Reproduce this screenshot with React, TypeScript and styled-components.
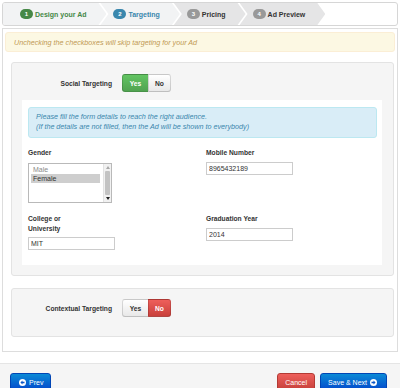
import styled, { createGlobalStyle } from 'styled-components';

type StepState = 'done' | 'active' | 'todo';
type Tone = 'success' | 'danger';

const STEPS: { n: number; label: string; state: StepState }[] = [
  { n: 1, label: 'Design your Ad', state: 'done' },
  { n: 2, label: 'Targeting', state: 'active' },
  { n: 3, label: 'Pricing', state: 'todo' },
  { n: 4, label: 'Ad Preview', state: 'todo' },
];

const STEP_COLORS: Record<StepState, { text: string; badge: string; bg: string }> = {
  done: { text: '#468847', badge: '#468847', bg: '#f2f3f4' },
  active: { text: '#3a87ad', badge: '#3a87ad', bg: '#f2f3f4' },
  todo: { text: '#333', badge: '#999', bg: '#e5e5e6' },
};

const CircleArrow = ({ dir }: { dir: 'left' | 'right' }) => (
  <svg width="7" height="7" viewBox="0 0 14 14">
    <circle cx="7" cy="7" r="7" fill="#fff" />
    <path
      d={
        dir === 'left'
          ? 'M2.8 7 L7 2.9 L7 5.4 L11 5.4 L11 8.6 L7 8.6 L7 11.1 Z'
          : 'M11.2 7 L7 2.9 L7 5.4 L3 5.4 L3 8.6 L7 8.6 L7 11.1 Z'
      }
      fill="#0a56c8"
    />
  </svg>
);

const Toggle = ({ on, tone }: { on: boolean; tone: Tone }) => (
  <ToggleGroup>
    <ToggleBtn $w={27} $active={on} $tone="success">Yes</ToggleBtn>
    <ToggleBtn $w={23} $active={!on} $tone={tone}>No</ToggleBtn>
  </ToggleGroup>
);

const App = () => {
  return (
    <>
      <GlobalStyle />
      <Page>
        <Wizard>
          {STEPS.map((s, i) => (
            <Step key={s.n} $state={s.state} $first={i === 0}>
              <Badge $state={s.state}>{s.n}</Badge>
              {s.label}
            </Step>
          ))}
        </Wizard>

        <Panel>
          <Warning>Unchecking the checkboxes will skip targeting for your Ad</Warning>

          <Well $top={11} $bottom={10} $gap={10}>
            <ToggleRow>
              <RowLabel>Social Targeting</RowLabel>
              <Toggle on tone="success" />
            </ToggleRow>

            <FormBox>
              <Info>
                Please fill the form details to reach the right audience.
                <br />
                (If the details are not filled, then the Ad will be shown to everybody)
              </Info>

              <FormGrid>
                <Field>
                  <Label $gap={5}>Gender</Label>
                  <ListBox role="listbox" aria-multiselectable="true">
                    <Options>
                      <Option>Male</Option>
                      <Option $selected>Female</Option>
                    </Options>
                    <ScrollBar>
                      <ScrollArrow>
                        <ArrowUp />
                      </ScrollArrow>
                      <Thumb />
                      <ScrollArrow>
                        <ArrowDown />
                      </ScrollArrow>
                    </ScrollBar>
                  </ListBox>
                </Field>
                <Field>
                  <Label $gap={4}>Mobile Number</Label>
                  <TextInput value="8965432189" readOnly />
                </Field>
                <Field>
                  <Label $gap={3} $max={48}>College or University</Label>
                  <TextInput value="MIT" readOnly />
                </Field>
                <Field>
                  <Label $gap={4}>Graduation Year</Label>
                  <TextInput value="2014" readOnly />
                </Field>
              </FormGrid>
            </FormBox>
          </Well>

          <Well $top={10} $bottom={19} $gap={12}>
            <ToggleRow>
              <RowLabel>Contextual Targeting</RowLabel>
              <Toggle on={false} tone="danger" />
            </ToggleRow>
          </Well>
        </Panel>

        <Footer>
          <ActionBtn $tone="primary" $pad="0 7px 0 8px">
            <CircleArrow dir="left" />
            Prev
          </ActionBtn>
          <FooterRight>
            <ActionBtn $tone="danger" $pad="0 7px">Cancel</ActionBtn>
            <ActionBtn $tone="primary" $pad="0 9px 0 7px">
              Save &amp; Next
              <CircleArrow dir="right" />
            </ActionBtn>
          </FooterRight>
        </Footer>
      </Page>
    </>
  );
};

const GlobalStyle = createGlobalStyle`
  html, body {
    margin: 0;
    padding: 0;
    background: #fff;
  }
  body {
    font-family: "Liberation Sans", Arial, sans-serif;
    color: #333;
  }
  * {
    box-sizing: border-box;
  }
`;

const Page = styled.div`
  padding-top: 2px;
  min-height: 388px;
  display: flex;
  flex-direction: column;
`;

const Wizard = styled.div`
  display: flex;
  height: 24px;
  margin: 0 2px;
  border: 1px solid #d6d6d6;
  border-radius: 3px;
  background: #fff;
  overflow: hidden;
`;

const Step = styled.div<{ $state: StepState; $first: boolean }>`
  display: flex;
  align-items: center;
  gap: 2px;
  height: 100%;
  padding: 0 20px 0 ${(p) => (p.$first ? 17 : 13)}px;
  margin-left: ${(p) => (p.$first ? 0 : -6)}px;
  background: ${(p) => STEP_COLORS[p.$state].bg};
  color: ${(p) => STEP_COLORS[p.$state].text};
  font-size: 7px;
  font-weight: bold;
  white-space: nowrap;
  clip-path: ${(p) =>
    p.$first
      ? 'polygon(0 0, calc(100% - 8px) 0, 100% 50%, calc(100% - 8px) 100%, 0 100%)'
      : 'polygon(0 0, calc(100% - 8px) 0, 100% 50%, calc(100% - 8px) 100%, 0 100%, 8px 50%)'};
`;

const Badge = styled.span<{ $state: StepState }>`
  display: inline-flex;
  align-items: center;
  justify-content: center;
  width: 13px;
  height: 10px;
  border-radius: 5px;
  background: ${(p) => STEP_COLORS[p.$state].badge};
  color: #fff;
  font-size: 6px;
  font-weight: bold;
`;

const Panel = styled.div`
  margin: 2px 2px 0;
  border: 1px solid #ddd;
  padding: 3px 2px 14px;
`;

const Warning = styled.div`
  height: 20px;
  display: flex;
  align-items: center;
  padding: 0 8px;
  background: #fcf8e3;
  border: 1px solid #fbeed5;
  border-radius: 3px;
  color: #c09853;
  font-size: 7.2px;
  font-style: italic;
`;

const Well = styled.div<{ $top: number; $bottom: number; $gap: number }>`
  margin: ${(p) => p.$gap}px 1px 0 6px;
  padding: ${(p) => p.$top}px 11px ${(p) => p.$bottom}px 10px;
  background: #f5f5f5;
  border: 1px solid #e3e3e3;
  border-radius: 3px;
`;

const ToggleRow = styled.div`
  display: flex;
  align-items: center;
  height: 18px;
`;

const RowLabel = styled.span`
  width: 90px;
  margin-right: 10px;
  text-align: right;
  font-size: 6.7px;
  font-weight: bold;
  color: #333;
`;

const ToggleGroup = styled.div`
  display: inline-flex;
`;

const ToggleBtn = styled.button<{ $w: number; $active: boolean; $tone: Tone }>`
  width: ${(p) => p.$w}px;
  height: 18px;
  padding: 0;
  font-family: "Liberation Sans", Arial, sans-serif;
  font-size: 6.7px;
  font-weight: bold;
  border: 1px solid rgba(0, 0, 0, 0.14);
  border-bottom-color: rgba(0, 0, 0, 0.25);
  color: ${(p) => (p.$active ? '#fff' : '#333')};
  background: ${(p) =>
    !p.$active
      ? 'linear-gradient(#ffffff, #e8e8e8)'
      : p.$tone === 'success'
        ? 'linear-gradient(#62c462, #51a351)'
        : 'linear-gradient(#ee5f5b, #c9403b)'};
  &:first-child {
    border-radius: 3px 0 0 3px;
  }
  &:last-child {
    border-radius: 0 3px 3px 0;
    margin-left: -1px;
  }
`;

const FormBox = styled.div`
  margin-top: 8px;
  padding: 7px 5px 15px 6px;
  background: #fff;
`;

const Info = styled.div`
  padding: 4px 7px 5px;
  background: #d9edf7;
  border: 1px solid #bce8f1;
  border-radius: 3px;
  color: #3a87ad;
  font-size: 7.2px;
  font-style: italic;
  line-height: 10px;
`;

const FormGrid = styled.div`
  display: grid;
  grid-template-columns: 178px 1fr;
  row-gap: 11px;
  margin-top: 10px;
`;

const Field = styled.div`
  display: flex;
  flex-direction: column;
  align-items: flex-start;
`;

const Label = styled.label<{ $gap: number; $max?: number }>`
  font-size: 6.7px;
  font-weight: bold;
  line-height: 10px;
  margin-bottom: ${(p) => p.$gap}px;
  max-width: ${(p) => (p.$max ? `${p.$max}px` : 'none')};
  color: #333;
`;

const TextInput = styled.input`
  width: 87px;
  height: 13px;
  padding: 0 2px;
  border: 1px solid #ccc;
  border-radius: 0;
  font-family: "Liberation Sans", Arial, sans-serif;
  font-size: 7px;
  color: #333;
  outline: none;
`;

const ListBox = styled.div`
  display: flex;
  width: 84px;
  height: 40px;
  border: 1px solid #b9b9b9;
  background: #fff;
`;

const Options = styled.div`
  flex: 1;
  padding: 1px 3px 0 2px;
`;

const Option = styled.div<{ $selected?: boolean }>`
  height: 9px;
  line-height: 9px;
  padding-left: 2px;
  font-size: 7px;
  color: ${(p) => (p.$selected ? '#333' : '#8a8a8a')};
  background: ${(p) => (p.$selected ? '#cecece' : 'transparent')};
`;

const ScrollBar = styled.div`
  width: 8px;
  display: flex;
  flex-direction: column;
  background: #f1f1f1;
  border-left: 1px solid #e2e2e2;
`;

const ScrollArrow = styled.div`
  height: 7px;
  display: flex;
  align-items: center;
  justify-content: center;
`;

const ArrowUp = styled.span`
  width: 0;
  height: 0;
  border-left: 2px solid transparent;
  border-right: 2px solid transparent;
  border-bottom: 3px solid #a8a8a8;
`;

const ArrowDown = styled.span`
  width: 0;
  height: 0;
  border-left: 2px solid transparent;
  border-right: 2px solid transparent;
  border-top: 3px solid #222;
`;

const Thumb = styled.div`
  flex: 1;
  margin: 0 1px;
  background: #c3c3c3;
  border-radius: 1px;
`;

const Footer = styled.div`
  flex: 1;
  display: flex;
  align-items: flex-start;
  justify-content: space-between;
  margin-top: 11px;
  padding: 9px 13px 0 10px;
  background: #f5f5f5;
  border-top: 1px solid #e5e5e5;
`;

const FooterRight = styled.div`
  display: flex;
  gap: 5px;
`;

const ActionBtn = styled.button<{ $tone: 'primary' | 'danger'; $pad: string }>`
  display: inline-flex;
  align-items: center;
  gap: 3px;
  height: 18px;
  padding: ${(p) => p.$pad};
  border: 1px solid ${(p) => (p.$tone === 'primary' ? '#0045b5' : '#b33a34')};
  border-radius: 3px;
  font-family: "Liberation Sans", Arial, sans-serif;
  font-size: 7px;
  color: #fff;
  background: ${(p) =>
    p.$tone === 'primary'
      ? 'linear-gradient(#0a8ad6, #0449cc)'
      : 'linear-gradient(#ee5f5b, #c6403a)'};
`;

export default App;
